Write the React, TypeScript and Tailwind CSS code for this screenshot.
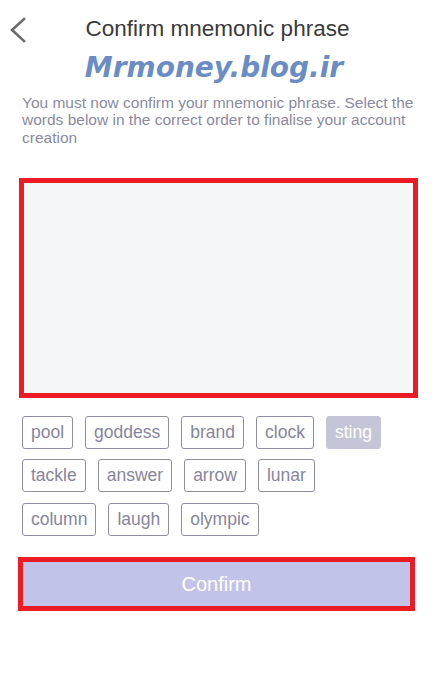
const words = [
  ["pool", "goddess", "brand", "clock", "sting"],
  ["tackle", "answer", "arrow", "lunar"],
  ["column", "laugh", "olympic"],
];

const selected = new Set(["sting"]);

function WordChip({ word }: { word: string }) {
  const isUsed = selected.has(word);
  return (
    <button
      className={
        isUsed
          ? "h-[33px] rounded-[3px] border border-[#c5c5d8] bg-[#c5c5d8] px-[8px] text-[17.5px] leading-none text-white"
          : "h-[33px] rounded-[3px] border border-[#8e8ea2] bg-white px-[8px] text-[17.5px] leading-none text-[#86869a]"
      }
    >
      {word}
    </button>
  );
}

export default function App() {
  return (
    <div
      className="flex h-[681px] w-[440px] flex-col bg-white"
      style={{ fontFamily: '"Liberation Sans", Arial, sans-serif' }}
    >
      <header className="relative mt-[16px] flex h-[26px] items-center justify-center">
        <button className="absolute left-[9px] top-[1px]">
          <svg width="18" height="26" viewBox="0 0 18 26" fill="none">
            <path
              d="M15 2 L3 13 L15 24"
              stroke="#6b6b6b"
              strokeWidth="2.6"
              strokeLinecap="square"
            />
          </svg>
        </button>
        <h1 className="ml-[-5px] text-[22.5px] leading-[26px] text-[#3a3a3a]">
          Confirm mnemonic phrase
        </h1>
      </header>

      <div
        className="mt-[10px] ml-[-12px] text-center text-[28px] font-bold italic leading-[32px] text-[#6a8ec4]"
        style={{ fontFamily: '"DejaVu Sans", Verdana, sans-serif' }}
      >
        Mrmoney.blog.ir
      </div>

      <p className="mx-[22px] mt-[10px] text-[15.5px] leading-[17.3px] text-[#8a8aa0]">
        You must now confirm your mnemonic phrase. Select the words below in the
        correct order to finalise your account creation
      </p>

      <div className="mt-[32px] ml-[19px] h-[220px] w-[399px] border-[5px] border-[#ed1c24] bg-[#f5f6f8]" />

      <div className="mx-[22px] mt-[18px] flex flex-col gap-y-[10.5px]">
        {words.map((row, i) => (
          <div key={i} className="flex gap-x-[12px]">
            {row.map((w) => (
              <WordChip key={w} word={w} />
            ))}
          </div>
        ))}
      </div>

      <div className="mt-[21px] ml-[18px] h-[54px] w-[397px] border-[5px] border-[#ed1c24]">
        <button className="flex h-full w-full items-center justify-center bg-[#c2c3e8] text-[20px] text-white">
          Confirm
        </button>
      </div>
    </div>
  );
}
